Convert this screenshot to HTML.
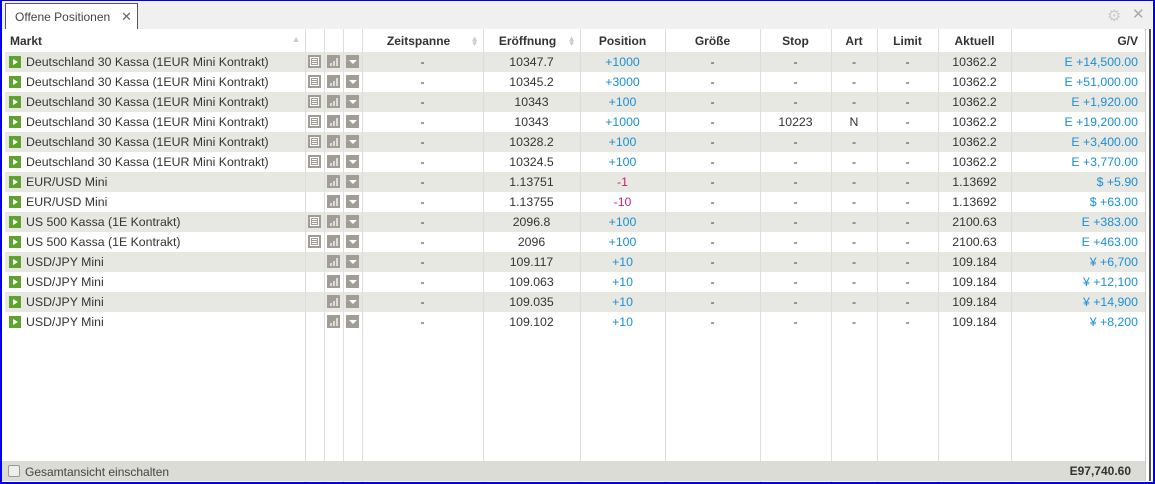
<!DOCTYPE html>
<html><head><meta charset="utf-8"><style>
*{margin:0;padding:0;box-sizing:border-box}
body{width:1155px;height:484px;background:#fff;font-family:"Liberation Sans",Arial,sans-serif;font-size:12.3px;color:#333;position:relative;overflow:hidden}
.outer{position:absolute;left:0;top:0;width:1155px;height:484px;border:1px solid #0000ee;border-width:1px 2px 2px 2px}
.tabbar{position:absolute;left:1px;top:1px;width:1151px;height:28px;background:#f0f0f0}
.tab{position:absolute;left:4px;top:2px;width:133px;height:27px;background:#fff;border:1px solid #555;border-bottom:none;font-size:12px;color:#444;padding:6px 0 0 9px}
.tab span{position:absolute;left:115px;top:5px;color:#666;font-size:13px}
.rb{position:absolute;left:1145px;top:29px;width:6px;height:452px;background:#fff;border-left:1px solid #ccc;border-right:2px solid #555}
table{position:absolute;left:5px;top:29px;border-collapse:collapse;table-layout:fixed;width:1140px}
td,th{height:20px;padding:0 4px;white-space:nowrap;overflow:hidden;border-left:1px solid #ddd;text-align:center}
th{height:23px;font-weight:bold;color:#333;background:#fff;font-size:12px}
th.l,td.l{text-align:left;border-left:none}
td.r,th.r{text-align:right;padding-right:7px}
tr.g td{background:#e8e8e3}
.b{color:#1a8fd6}.m{color:#c0257a}
.pl{display:inline-block;width:12px;height:12px;background:#5fa32e;vertical-align:-2px;margin-right:5px;position:relative}
.pl:after{content:"";position:absolute;left:4px;top:3px;border-left:5px solid #fff;border-top:3px solid transparent;border-bottom:3px solid transparent}
.ic{display:inline-block;width:13px;height:13px;background:#a19d94;vertical-align:-2px;position:relative}
.doc:after{content:"";position:absolute;left:2px;top:2px;width:9px;height:9px;border:1px solid #fff;background:#a19d94;box-sizing:border-box}
.doc:before{content:"";position:absolute;left:4px;top:4px;width:5px;height:5px;background:repeating-linear-gradient(#fff 0 1px,#a19d94 1px 2px);z-index:1}
.bar:before{content:"";position:absolute;left:3px;top:8px;width:2px;height:3px;background:#ddd;box-shadow:3px -2px 0 0 #ddd,3px 0 0 0 #ddd}
.bar:after{content:"";position:absolute;left:9px;top:3px;width:2px;height:8px;background:#ddd}
.dd:after{content:"";position:absolute;left:3px;top:5px;border-top:4px solid #fff;border-left:4px solid transparent;border-right:4px solid transparent}
td.i{padding:0;border-left:1px solid #ddd}
.filler td{height:auto}
.foot{position:absolute;left:1px;top:461px;width:1144px;height:20px;background:#dcdcd6;font-size:12px;color:#444}
.cb{position:absolute;left:7px;top:4px;width:12px;height:12px;border:1px solid #999;border-radius:2px;background:#eee}
.sort{color:#ccc;font-size:8px;float:right;line-height:5px;margin-top:2px}
</style></head><body>
<div class="tabbar"><div class="tab">Offene Positionen<span>✕</span></div>
<div style="position:absolute;left:1106px;top:5px;color:#ccc;font-size:16px">⚙</div>
<div style="position:absolute;left:1131px;top:4px;color:#aaa;font-size:15px">✕</div></div>
<table>
<colgroup><col style="width:300px"><col style="width:19px"><col style="width:19px"><col style="width:19px"><col style="width:121px"><col style="width:97px"><col style="width:85px"><col style="width:95px"><col style="width:71px"><col style="width:46px"><col style="width:61px"><col style="width:73px"><col style="width:134px"></colgroup>
<tr><th class="l" style="padding-left:5px">Markt<span style="float:right;color:#ccc;font-size:9px">▲</span></th><th></th><th></th><th></th><th>Zeitspanne <span class="sort">▲<br>▼</span></th><th>Eröffnung <span class="sort">▲<br>▼</span></th><th>Position</th><th>Größe</th><th>Stop</th><th>Art</th><th>Limit</th><th>Aktuell</th><th class="r">G/V</th></tr>
<tr class="g"><td class="l"><span class="pl"></span>Deutschland 30 Kassa (1EUR Mini Kontrakt)</td><td class="i"><span class="ic doc"></span></td><td class="i"><span class="ic bar"></span></td><td class="i"><span class="ic dd"></span></td><td>-</td><td>10347.7</td><td class="b">+1000</td><td>-</td><td>-</td><td>-</td><td>-</td><td>10362.2</td><td class="r b">E +14,500.00</td></tr>
<tr><td class="l"><span class="pl"></span>Deutschland 30 Kassa (1EUR Mini Kontrakt)</td><td class="i"><span class="ic doc"></span></td><td class="i"><span class="ic bar"></span></td><td class="i"><span class="ic dd"></span></td><td>-</td><td>10345.2</td><td class="b">+3000</td><td>-</td><td>-</td><td>-</td><td>-</td><td>10362.2</td><td class="r b">E +51,000.00</td></tr>
<tr class="g"><td class="l"><span class="pl"></span>Deutschland 30 Kassa (1EUR Mini Kontrakt)</td><td class="i"><span class="ic doc"></span></td><td class="i"><span class="ic bar"></span></td><td class="i"><span class="ic dd"></span></td><td>-</td><td>10343</td><td class="b">+100</td><td>-</td><td>-</td><td>-</td><td>-</td><td>10362.2</td><td class="r b">E +1,920.00</td></tr>
<tr><td class="l"><span class="pl"></span>Deutschland 30 Kassa (1EUR Mini Kontrakt)</td><td class="i"><span class="ic doc"></span></td><td class="i"><span class="ic bar"></span></td><td class="i"><span class="ic dd"></span></td><td>-</td><td>10343</td><td class="b">+1000</td><td>-</td><td>10223</td><td>N</td><td>-</td><td>10362.2</td><td class="r b">E +19,200.00</td></tr>
<tr class="g"><td class="l"><span class="pl"></span>Deutschland 30 Kassa (1EUR Mini Kontrakt)</td><td class="i"><span class="ic doc"></span></td><td class="i"><span class="ic bar"></span></td><td class="i"><span class="ic dd"></span></td><td>-</td><td>10328.2</td><td class="b">+100</td><td>-</td><td>-</td><td>-</td><td>-</td><td>10362.2</td><td class="r b">E +3,400.00</td></tr>
<tr><td class="l"><span class="pl"></span>Deutschland 30 Kassa (1EUR Mini Kontrakt)</td><td class="i"><span class="ic doc"></span></td><td class="i"><span class="ic bar"></span></td><td class="i"><span class="ic dd"></span></td><td>-</td><td>10324.5</td><td class="b">+100</td><td>-</td><td>-</td><td>-</td><td>-</td><td>10362.2</td><td class="r b">E +3,770.00</td></tr>
<tr class="g"><td class="l"><span class="pl"></span>EUR/USD Mini</td><td class="i"></td><td class="i"><span class="ic bar"></span></td><td class="i"><span class="ic dd"></span></td><td>-</td><td>1.13751</td><td class="m">-1</td><td>-</td><td>-</td><td>-</td><td>-</td><td>1.13692</td><td class="r b">$ +5.90</td></tr>
<tr><td class="l"><span class="pl"></span>EUR/USD Mini</td><td class="i"></td><td class="i"><span class="ic bar"></span></td><td class="i"><span class="ic dd"></span></td><td>-</td><td>1.13755</td><td class="m">-10</td><td>-</td><td>-</td><td>-</td><td>-</td><td>1.13692</td><td class="r b">$ +63.00</td></tr>
<tr class="g"><td class="l"><span class="pl"></span>US 500 Kassa (1E Kontrakt)</td><td class="i"><span class="ic doc"></span></td><td class="i"><span class="ic bar"></span></td><td class="i"><span class="ic dd"></span></td><td>-</td><td>2096.8</td><td class="b">+100</td><td>-</td><td>-</td><td>-</td><td>-</td><td>2100.63</td><td class="r b">E +383.00</td></tr>
<tr><td class="l"><span class="pl"></span>US 500 Kassa (1E Kontrakt)</td><td class="i"><span class="ic doc"></span></td><td class="i"><span class="ic bar"></span></td><td class="i"><span class="ic dd"></span></td><td>-</td><td>2096</td><td class="b">+100</td><td>-</td><td>-</td><td>-</td><td>-</td><td>2100.63</td><td class="r b">E +463.00</td></tr>
<tr class="g"><td class="l"><span class="pl"></span>USD/JPY Mini</td><td class="i"></td><td class="i"><span class="ic bar"></span></td><td class="i"><span class="ic dd"></span></td><td>-</td><td>109.117</td><td class="b">+10</td><td>-</td><td>-</td><td>-</td><td>-</td><td>109.184</td><td class="r b">¥ +6,700</td></tr>
<tr><td class="l"><span class="pl"></span>USD/JPY Mini</td><td class="i"></td><td class="i"><span class="ic bar"></span></td><td class="i"><span class="ic dd"></span></td><td>-</td><td>109.063</td><td class="b">+10</td><td>-</td><td>-</td><td>-</td><td>-</td><td>109.184</td><td class="r b">¥ +12,100</td></tr>
<tr class="g"><td class="l"><span class="pl"></span>USD/JPY Mini</td><td class="i"></td><td class="i"><span class="ic bar"></span></td><td class="i"><span class="ic dd"></span></td><td>-</td><td>109.035</td><td class="b">+10</td><td>-</td><td>-</td><td>-</td><td>-</td><td>109.184</td><td class="r b">¥ +14,900</td></tr>
<tr><td class="l"><span class="pl"></span>USD/JPY Mini</td><td class="i"></td><td class="i"><span class="ic bar"></span></td><td class="i"><span class="ic dd"></span></td><td>-</td><td>109.102</td><td class="b">+10</td><td>-</td><td>-</td><td>-</td><td>-</td><td>109.184</td><td class="r b">¥ +8,200</td></tr>
<tr class="filler"><td class="l" style="height:152px"></td><td></td><td></td><td></td><td></td><td></td><td></td><td></td><td></td><td></td><td></td><td></td><td></td></tr>
</table>
<div class="rb"></div>
<div class="foot"><div class="cb"></div><span style="position:absolute;left:24px;top:4px">Gesamtansicht einschalten</span><b style="position:absolute;right:14px;top:3px;color:#333">E97,740.60</b></div>
<div class="outer"></div>
</body></html>
